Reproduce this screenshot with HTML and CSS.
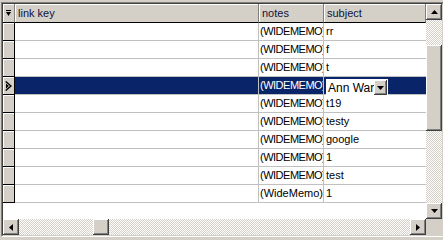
FILE: index.html
```html
<!DOCTYPE html>
<html lang="en">
<head>
<meta charset="utf-8">
<title>Grid</title>
<link rel="stylesheet" href="styles.css">
</head>
<body>
<div class="frame">
 <div class="frame-inner">
  <div class="grid">
   <!-- header -->
   <div class="row head">
    <div class="ind"><svg width="5" height="6" viewBox="0 0 5 6"><path d="M0 0h5v1H0z M0 2h5L2.5 6z" fill="#000"/></svg></div>
    <div class="cell key">link key</div>
    <div class="cell notes">notes</div>
    <div class="cell subj">subject</div>
   </div>
   <div class="row"><div class="ind"></div><div class="cell key"></div><div class="cell notes"><span class="memo">(WIDEMEMO)</span></div><div class="cell subj">rr</div></div>
   <div class="row"><div class="ind"></div><div class="cell key"></div><div class="cell notes"><span class="memo">(WIDEMEMO)</span></div><div class="cell subj">f</div></div>
   <div class="row"><div class="ind"></div><div class="cell key"></div><div class="cell notes"><span class="memo">(WIDEMEMO)</span></div><div class="cell subj">t</div></div>
   <div class="row current">
    <div class="ind"><svg width="7" height="10" viewBox="0 0 7 10"><path d="M0.7 0.5 L6 5 L0.7 9.5" fill="none" stroke="#000" stroke-width="1.4"/><path d="M1 2.5 L3.8 5 L1 7.5z" fill="#000"/></svg></div>
    <div class="cell key"></div>
    <div class="cell notes"><span class="memo">(WIDEMEMO)</span></div>
    <div class="cell subj">
     <div class="combo"><span class="combo-text">Ann War</span><span class="combo-btn"><svg width="7" height="4" viewBox="0 0 7 4"><path d="M0 0h7L3.5 4z" fill="#000"/></svg></span></div>
    </div>
   </div>
   <div class="row"><div class="ind"></div><div class="cell key"></div><div class="cell notes"><span class="memo">(WIDEMEMO)</span></div><div class="cell subj">t19</div></div>
   <div class="row"><div class="ind"></div><div class="cell key"></div><div class="cell notes"><span class="memo">(WIDEMEMO)</span></div><div class="cell subj">testy</div></div>
   <div class="row"><div class="ind"></div><div class="cell key"></div><div class="cell notes"><span class="memo">(WIDEMEMO)</span></div><div class="cell subj">google</div></div>
   <div class="row"><div class="ind"></div><div class="cell key"></div><div class="cell notes"><span class="memo">(WIDEMEMO)</span></div><div class="cell subj">1</div></div>
   <div class="row"><div class="ind"></div><div class="cell key"></div><div class="cell notes"><span class="memo">(WIDEMEMO)</span></div><div class="cell subj">test</div></div>
   <div class="row"><div class="ind"></div><div class="cell key"></div><div class="cell notes">(WideMemo)</div><div class="cell subj">1</div></div>
  </div>

  <!-- vertical scrollbar -->
  <div class="vscroll">
   <div class="sbtn"><svg width="7" height="4" viewBox="0 0 7 4"><path d="M3.5 0L7 4H0z" fill="#000"/></svg></div>
   <div class="track vtop"></div>
   <div class="sbtn vthumb"></div>
   <div class="track fill"></div>
   <div class="sbtn"><svg width="7" height="4" viewBox="0 0 7 4"><path d="M0 0h7L3.5 4z" fill="#000"/></svg></div>
  </div>

  <!-- horizontal scrollbar -->
  <div class="hscroll">
   <div class="sbtn"><svg width="4" height="7" viewBox="0 0 4 7"><path d="M0 3.5L4 0v7z" fill="#000"/></svg></div>
   <div class="track hleft"></div>
   <div class="sbtn"></div>
   <div class="track fill"></div>
   <div class="sbtn"><svg width="4" height="7" viewBox="0 0 4 7"><path d="M0 0l4 3.5L0 7z" fill="#000"/></svg></div>
  </div>
  <div class="corner"></div>
 </div>
</div>
</body>
</html>
```

FILE: styles.css
```css
/* Classic windows colours */
body {
  margin: 0;
  background: #d4d0c8;
  overflow: hidden;
  font-family: "Liberation Sans", Arial, sans-serif;
  font-size: 11px;
}
/* Sunken control border */
.frame {
  margin: 2px 0 0 1px;
  width: 441px;
  border: 1px solid;
  border-color: #808080 #ffffff #ffffff #808080;
}
.frame-inner {
  border: 1px solid;
  border-color: #404040 #d4d0c8 #d4d0c8 #404040;
  display: grid;
  grid-template-columns: 423px 16px;
  grid-template-rows: 215px 16px;
  width: 439px;
}
.grid {
  background: #fff;
  overflow: hidden;
}
/* Rows and cells */
.row {
  display: flex;
  height: 18px;
}
.row > div {
  box-sizing: border-box;
  height: 18px;
  flex: none;
}
.ind {
  width: 12px;
  background: #d4d0c8;
  border-right: 1px solid #000;
  border-bottom: 1px solid #000;
  box-shadow: inset 1px 1px #fff;
  display: flex;
  align-items: center;
  justify-content: center;
}
.cell {
  border-right: 1px solid #c0c0c0;
  border-bottom: 1px solid #c0c0c0;
  padding: 2px 0 0 2px;
  white-space: nowrap;
  overflow: hidden;
  color: #000;
}
.key {
  width: 244px;
}
.notes {
  width: 65px;
  padding-left: 1px;
}
/* Memo caption is clipped by the column, as the grid does */
.memo {
  letter-spacing: -0.5px;
}
.subj {
  width: 102px;
  border-right: none;
}
/* Header row */
.head {
  height: 19px;
}
.head > div {
  height: 19px;
  background: #d4d0c8;
  border-right: 1px solid #808080;
  border-bottom: 1px solid #000;
  box-shadow: inset 1px 1px #fff;
}
.head .ind {
  align-items: flex-start;
  padding-top: 6px;
  padding-right: 1px;
}
.head .cell {
  padding-top: 3px;
  padding-left: 3px;
  color: #101040;
}
/* Current record */
.current .cell {
  background: #0a246a;
  color: #fff;
}
.current .subj {
  padding: 2px 0 0 2px;
  overflow: visible;
}
.combo {
  display: flex;
  align-items: center;
  width: 62px;
  height: 17px;
  background: #fff;
  color: #000;
  box-sizing: border-box;
  padding: 1px;
}
.combo-text {
  flex: 1;
  font-size: 12px;
  padding-left: 1px;
  padding-top: 1px;
}
.combo-btn {
  width: 14px;
  height: 15px;
  box-sizing: border-box;
  background: #d4d0c8;
  box-shadow: inset -1px -1px #404040, inset 1px 1px #fff, inset -2px -2px #808080;
  display: flex;
  align-items: center;
  justify-content: center;
}
/* Scrollbars */
.vscroll {
  display: flex;
  flex-direction: column;
}
.hscroll {
  display: flex;
}
.sbtn {
  flex: none;
  width: 16px;
  height: 16px;
  box-sizing: border-box;
  background: #d4d0c8;
  box-shadow: inset -1px -1px #404040, inset 1px 1px #fff, inset -2px -2px #808080;
  display: flex;
  align-items: center;
  justify-content: center;
}
.track {
  background: repeating-conic-gradient(#d4d0c8 0 25%, #fff 0 50%) 0 0 / 2px 2px;
}
.fill {
  flex: 1;
}
.vtop {
  height: 25px;
}
.vthumb {
  height: 86px;
}
.hleft {
  width: 74px;
}
.corner {
  background: #d4d0c8;
}
```
